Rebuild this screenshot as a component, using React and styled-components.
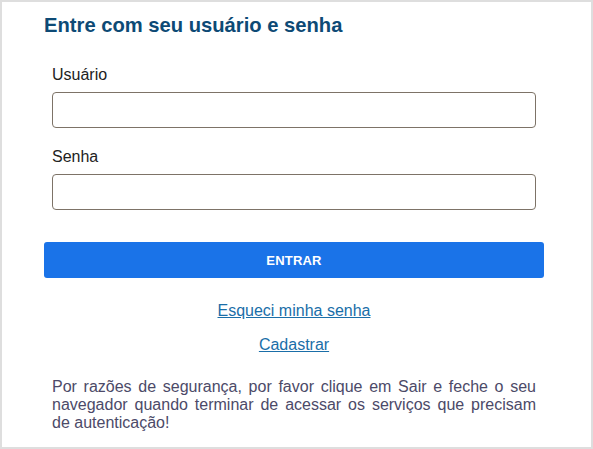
import React from "react";
import styled, { createGlobalStyle } from "styled-components";

const Global = createGlobalStyle`
  html, body { margin: 0; padding: 0; background: #fff; }
  body { font-family: "Liberation Sans", Arial, sans-serif; }
  * { box-sizing: border-box; }
`;

const Frame = styled.div`
  width: 593px;
  height: 449px;
  border: 2px solid #dedede;
  padding: 12px 47px 0 42px;
  background: #fff;
`;

const Title = styled.h1`
  margin: 0;
  font-size: 20.2px;
  line-height: 23px;
  font-weight: bold;
  color: #0d4a75;
`;

const Form = styled.form`
  display: flex;
  flex-direction: column;
  margin-top: 29px;
`;

const Field = styled.div`
  display: flex;
  flex-direction: column;
  padding: 0 8px;
  margin-bottom: ${(p) => p.$gap}px;
`;

const Label = styled.label`
  font-size: 16px;
  line-height: 18px;
  color: #222;
  margin-bottom: 8px;
`;

const Input = styled.input`
  height: 36px;
  width: 100%;
  border: 1px solid #7d7367;
  border-radius: 4px;
  background: #fff;
  font-size: 16px;
  padding: 0 10px;
  font-family: inherit;
`;

const Button = styled.button`
  height: 36px;
  width: 100%;
  border: none;
  border-radius: 3px;
  background: #1a73e8;
  color: #fff;
  font-family: inherit;
  font-size: 13px;
  font-weight: bold;
  letter-spacing: 0.2px;
`;

const Links = styled.div`
  display: flex;
  flex-direction: column;
  align-items: center;
  gap: 16px;
  margin-top: 24px;
`;

const Link = styled.a`
  font-size: 16px;
  line-height: 18px;
  color: #1a6ea8;
  text-decoration: underline;
`;

const Notice = styled.p`
  margin: 24px 0 0;
  padding: 0 8px;
  font-size: 16px;
  line-height: 18px;
  color: #4c4a68;
  text-align: justify;
`;

export default function App() {
  return (
    <>
      <Global />
      <Frame>
        <Title>Entre com seu usuário e senha</Title>
        <Form onSubmit={(e) => e.preventDefault()}>
          <Field $gap={20}>
            <Label htmlFor="user">Usuário</Label>
            <Input id="user" type="text" />
          </Field>
          <Field $gap={32}>
            <Label htmlFor="pass">Senha</Label>
            <Input id="pass" type="password" />
          </Field>
          <Button type="submit">ENTRAR</Button>
        </Form>
        <Links>
          <Link href="#">Esqueci minha senha</Link>
          <Link href="#">Cadastrar</Link>
        </Links>
        <Notice>
          Por razões de segurança, por favor clique em Sair e feche o seu
          navegador quando terminar de acessar os serviços que precisam de
          autenticação!
        </Notice>
      </Frame>
    </>
  );
}
